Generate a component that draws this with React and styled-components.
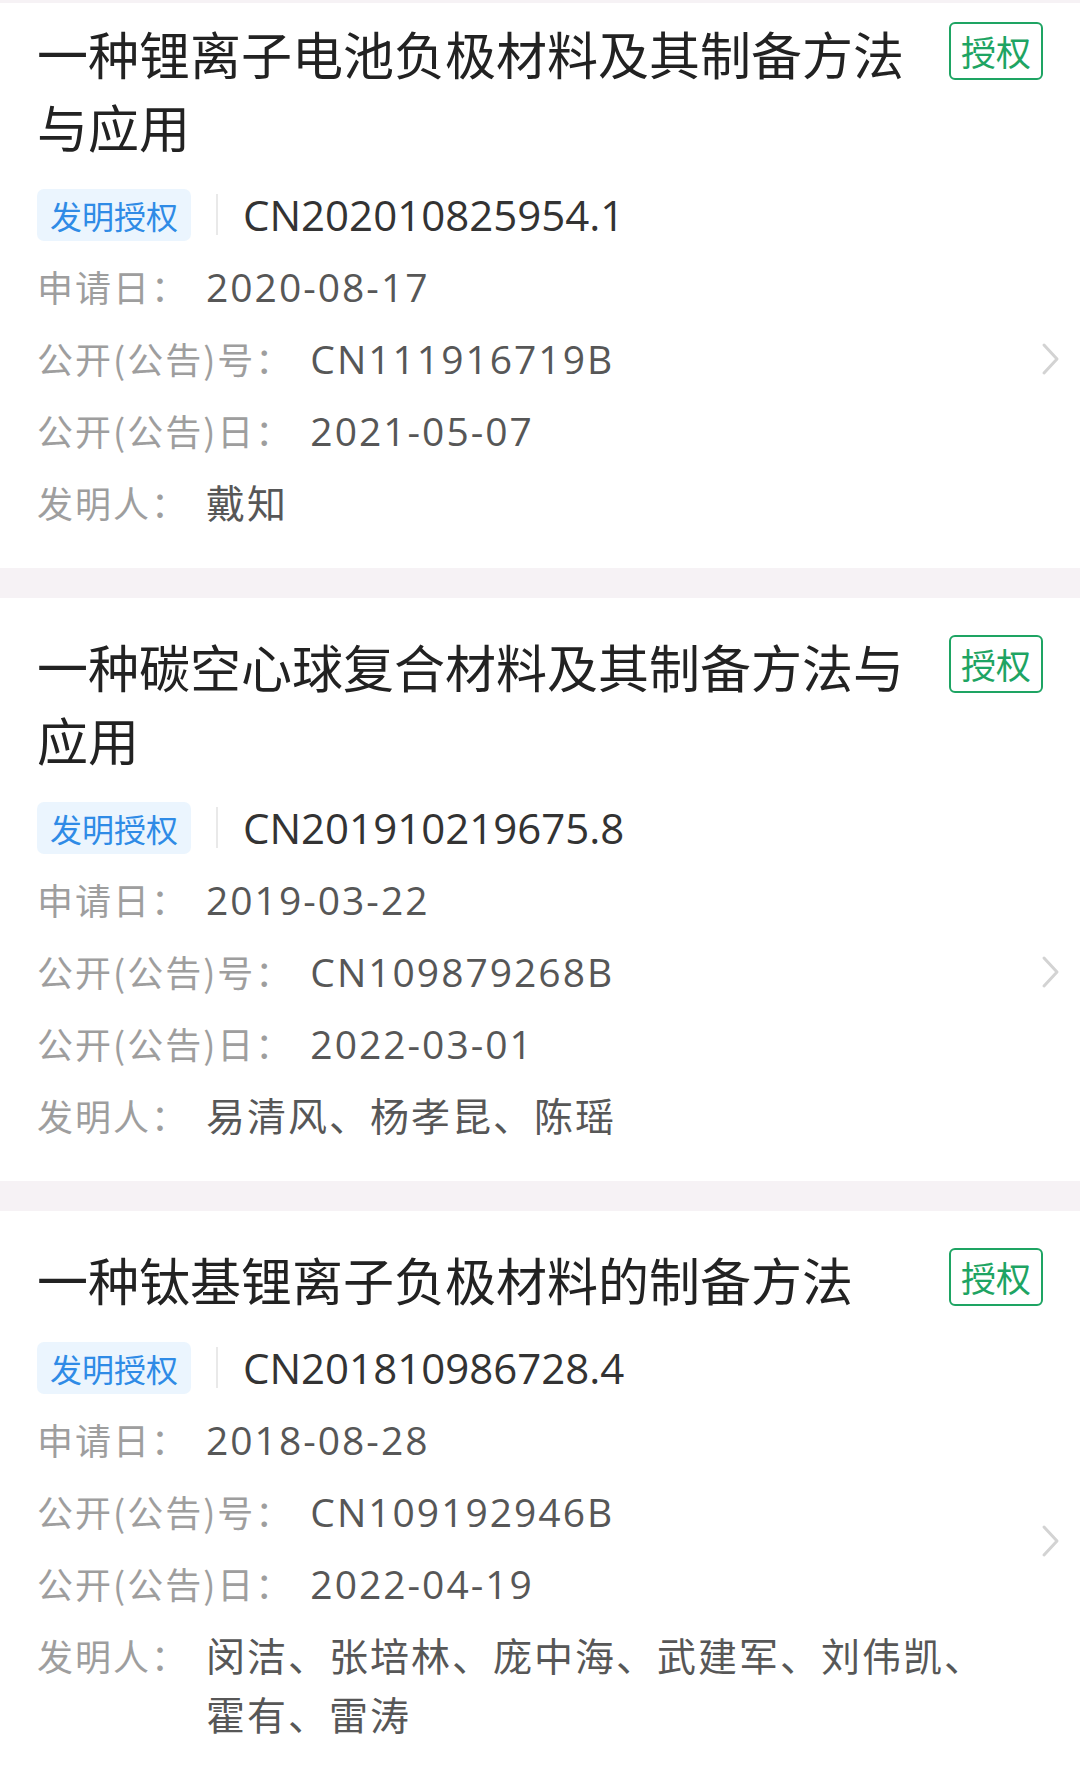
import React from 'react';
import styled, { createGlobalStyle } from 'styled-components';

const GlobalStyle = createGlobalStyle`
  html, body {
    margin: 0;
    padding: 0;
    background: #ffffff;
  }
  body {
    font-family: "Noto Sans CJK SC", "Noto Sans", sans-serif;
  }
`;

const patents = [
  {
    title: '一种锂离子电池负极材料及其制备方法与应用',
    number: 'CN202010825954.1',
    applyDate: '2020-08-17',
    pubNo: 'CN111916719B',
    pubDate: '2021-05-07',
    inventors: '戴知',
  },
  {
    title: '一种碳空心球复合材料及其制备方法与应用',
    number: 'CN201910219675.8',
    applyDate: '2019-03-22',
    pubNo: 'CN109879268B',
    pubDate: '2022-03-01',
    inventors: '易清风、杨孝昆、陈瑶',
  },
  {
    title: '一种钛基锂离子负极材料的制备方法',
    number: 'CN201810986728.4',
    applyDate: '2018-08-28',
    pubNo: 'CN109192946B',
    pubDate: '2022-04-19',
    inventors: '闵洁、张培林、庞中海、武建军、刘伟凯、霍有、雷涛',
  },
];

const Page = styled.div`
  width: 1080px;
  background: #f6f2f5;
  padding-top: 3px;
`;

const Card = styled.div`
  background: #ffffff;
  padding: ${(p) => (p.$first ? '14px' : '32px')} 19px 36px 37px;
  margin-bottom: 30px;
`;

const TitleRow = styled.div`
  display: flex;
  align-items: flex-start;
  margin-right: 18px;
  margin-bottom: 22px;
`;

const Title = styled.div`
  flex: 1;
  padding-right: 30px;
  font-size: 51px;
  line-height: 73px;
  color: #222222;
  font-family: "Noto Sans CJK SC", sans-serif;
`;

const StatusBadge = styled.div`
  flex-shrink: 0;
  margin-top: 5px;
  height: 54px;
  line-height: 54px;
  padding: 0 10px;
  border: 2.5px solid #1ea463;
  border-radius: 6px;
  color: #1ea463;
  font-size: 35px;
`;

const Body = styled.div`
  display: flex;
  align-items: center;
`;

const Info = styled.div`
  flex: 1;
  min-width: 0;
  margin-right: 40px;
`;

const NumberRow = styled.div`
  display: flex;
  align-items: center;
  height: 59px;
`;

const TypePill = styled.span`
  height: 52px;
  line-height: 52px;
  padding: 0 13px;
  border-radius: 7px;
  background: #ebf5fe;
  color: #2f8be6;
  font-size: 32px;
`;

const Divider = styled.span`
  width: 2px;
  height: 41px;
  margin: 0 25px;
  background: #e9e9e9;
`;

const PatentNo = styled.span`
  font-family: "Open Sans", "Noto Sans CJK SC", sans-serif;
  font-size: 42px;
  color: #333333;
`;

const Field = styled.div`
  display: flex;
  margin-top: 13px;
  line-height: 59px;
`;

const Label = styled.span`
  flex-shrink: 0;
  margin-right: 17px;
  font-size: 36px;
  letter-spacing: 2px;
  color: #9e9e9e;
`;

const Value = styled.span`
  flex: 1;
  font-family: "Open Sans", "Noto Sans CJK SC", sans-serif;
  font-size: 39px;
  letter-spacing: 2px;
  color: #575757;
`;

const Chevron = () => (
  <svg width="20" height="34" viewBox="0 0 20 34">
    <path
      d="M3 3 L16 17 L3 31"
      fill="none"
      stroke="#d3d3d3"
      strokeWidth="3"
      strokeLinecap="round"
      strokeLinejoin="round"
    />
  </svg>
);

const PatentCard = ({ item, first }) => (
  <Card $first={first}>
    <TitleRow>
      <Title>{item.title}</Title>
      <StatusBadge>授权</StatusBadge>
    </TitleRow>
    <Body>
      <Info>
        <NumberRow>
          <TypePill>发明授权</TypePill>
          <Divider />
          <PatentNo>{item.number}</PatentNo>
        </NumberRow>
        <Field>
          <Label>申请日：</Label>
          <Value>{item.applyDate}</Value>
        </Field>
        <Field>
          <Label>公开(公告)号：</Label>
          <Value>{item.pubNo}</Value>
        </Field>
        <Field>
          <Label>公开(公告)日：</Label>
          <Value>{item.pubDate}</Value>
        </Field>
        <Field>
          <Label>发明人：</Label>
          <Value>{item.inventors}</Value>
        </Field>
      </Info>
      <Chevron />
    </Body>
  </Card>
);

export default function App() {
  return (
    <>
      <GlobalStyle />
      <Page>
        {patents.map((p, i) => (
          <PatentCard key={p.number} item={p} first={i === 0} />
        ))}
      </Page>
    </>
  );
}
